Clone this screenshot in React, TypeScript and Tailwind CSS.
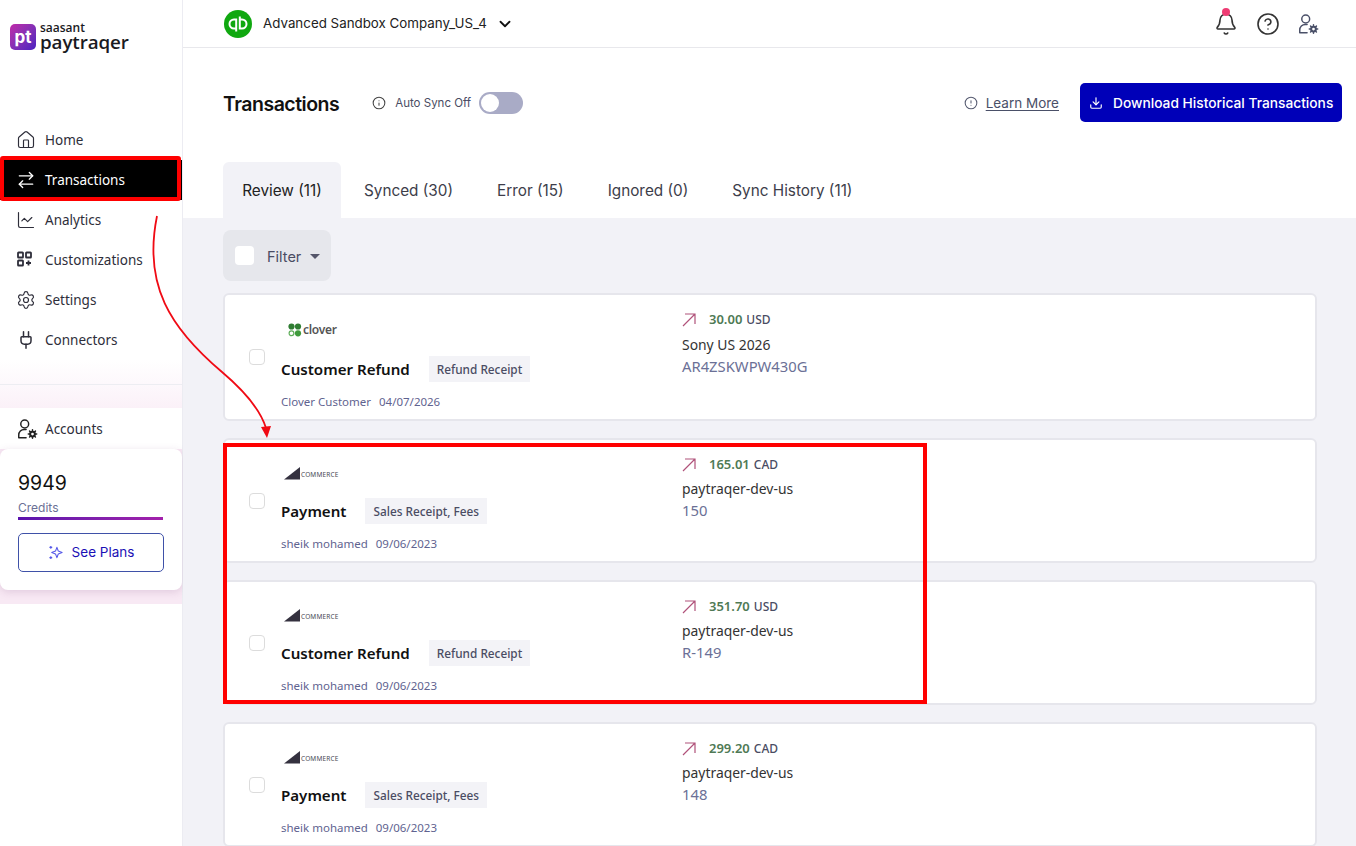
import { ArrowRightLeft, Bell, ChartLine, ChevronDown, CircleAlert, CircleHelp, Download, House, Info, Plug, Settings } from "lucide-react";

const UI = "font-['Inter',sans-serif]";
const CARD = "font-['Noto_Sans','Open_Sans',sans-serif]";

const UserGear = ({ size = 22 }: { size?: number }) => (
  <svg width={size} height={size} viewBox="0 0 24 24" fill="none" stroke="currentColor" strokeWidth="1.6" strokeLinecap="round">
    <circle cx="9.5" cy="6.5" r="4.3" />
    <path d="M3 21.5v-3a6 6 0 0 1 6-6h2M3 21.5h8" />
    <circle cx="18" cy="17.5" r="2.6" strokeWidth="2.2" />
    <path d="M18 12.8v1.6M18 20.6v1.6M13.4 17.5H15M21 17.5h1.6M14.8 14.3l1 1M20.2 19.7l1 1M14.8 20.7l1-1M20.2 15.3l1-1" strokeWidth="1.6" />
  </svg>
);

const GridPlus = () => (
  <svg width="18" height="18" viewBox="0 0 18 18" fill="none" stroke="currentColor" strokeWidth="1.8">
    <rect x="2" y="1.500" width="5" height="5" rx="0.6" />
    <rect x="10" y="1.500" width="5" height="5" rx="0.6" />
    <rect x="2" y="9.500" width="5" height="5" rx="0.6" />
    <path d="M12.500 9.500v5M10 12h5" />
  </svg>
);

const Sparkle = () => (
  <svg width="15" height="15" viewBox="0 0 16 16" fill="none" stroke="#5558e8" strokeWidth="1.2" strokeLinejoin="round">
    <path d="M9.500 2.500 11 6.500 15 8l-4 1.500-1.500 4-1.500-4L4 8l4-1.500z" />
    <path d="M3 1v3M1.500 2.500h3M3 12v3M1.500 13.500h3" />
  </svg>
);

const UpArrow = () => (
  <svg width="14" height="14" viewBox="0 0 14 14" fill="none" stroke="#b0527a" strokeWidth="1.2">
    <path d="M1 13 13 1M3 1h10v10" />
  </svg>
);

const navItems = [
  { label: "Home", icon: <House size={20} strokeWidth={1.4} /> },
  { label: "Transactions", icon: <ArrowRightLeft size={20} strokeWidth={1.6} />, active: true },
  { label: "Analytics", icon: <ChartLine size={20} strokeWidth={1.4} /> },
  { label: "Customizations", icon: <GridPlus /> },
  { label: "Settings", icon: <Settings size={20} strokeWidth={1.4} /> },
  { label: "Connectors", icon: <Plug size={20} strokeWidth={1.8} /> },
];

const tabs = ["Synced (30)", "Error (15)", "Ignored (0)", "Sync History (11)"];

const Clover = () => (
  <div className="mt-px flex h-[24px] items-center pl-[7px]">
    <svg width="14" height="14" viewBox="0 0 14 14">
      <circle cx="3.500" cy="3.500" r="3.100" fill="#2f7d32" />
      <circle cx="10" cy="3.500" r="3.100" fill="#2f7d32" />
      <circle cx="10" cy="10.300" r="3.100" fill="#3f9a3c" />
      <circle cx="3.500" cy="10.300" r="2.400" fill="none" stroke="#5fae5a" strokeWidth="1.200" />
    </svg>
    <span className="ml-px text-[12px] leading-none font-semibold tracking-[-0.3px] text-[#555]">clover</span>
  </div>
);

const BigCommerce = () => (
  <div className="flex h-[24px] items-center pl-[3px]">
    <svg width="18" height="13" viewBox="0 0 18 13" className="-mt-[2px]">
      <path d="M0 12.500 16 0v12.500z" fill="#34313f" />
    </svg>
    <span className="ml-[-1px] mt-[3px] text-[6.500px] leading-none tracking-[0.15px] text-[#4a4a55]">COMMERCE</span>
  </div>
);

type Txn = {
  source: "clover" | "bigcommerce";
  title: string;
  badge: string;
  customer: string;
  date: string;
  amount: string;
  currency: string;
  account: string;
  ref: string;
};

const txns: Txn[] = [
  { source: "clover", title: "Customer Refund", badge: "Refund Receipt", customer: "Clover Customer", date: "04/07/2026", amount: "30.00", currency: "USD", account: "Sony US 2026", ref: "AR4ZSKWPW430G" },
  { source: "bigcommerce", title: "Payment", badge: "Sales Receipt, Fees", customer: "sheik mohamed", date: "09/06/2023", amount: "165.01", currency: "CAD", account: "paytraqer-dev-us", ref: "150" },
  { source: "bigcommerce", title: "Customer Refund", badge: "Refund Receipt", customer: "sheik mohamed", date: "09/06/2023", amount: "351.70", currency: "USD", account: "paytraqer-dev-us", ref: "R-149" },
  { source: "bigcommerce", title: "Payment", badge: "Sales Receipt, Fees", customer: "sheik mohamed", date: "09/06/2023", amount: "299.20", currency: "CAD", account: "paytraqer-dev-us", ref: "148" },
];

const TxnCard = ({ txn }: { txn: Txn }) => {
  const clover = txn.source === "clover";
  return (
    <div className={`${CARD} flex shrink-0 items-center rounded-md border-2 border-[#e6e6ec] bg-white pl-6 ${clover ? "h-[128px]" : "h-[125px]"}`}>
      <div className="h-4 w-4 shrink-0 rounded-[4px] border border-[#dcdcdc] bg-white" />
      <div className="ml-4 h-full w-[401px] shrink-0 pt-[22px]">
        {clover ? <Clover /> : <BigCommerce />}
        <div className={`flex h-[26px] items-center ${clover ? "mt-[14px]" : "mt-[12px]"}`}>
          <span className="text-[15.100px] font-semibold text-[#111]">{txn.title}</span>
          <span className="ml-[19px] flex h-[26px] items-center bg-[#f3f3f7] px-2 pt-px text-[11.800px] font-medium text-[#4a4c63]">{txn.badge}</span>
        </div>
        <div className="mt-[12px] flex gap-2 text-[11.500px] leading-[16px] text-[#5f6390]">
          <span>{txn.customer}</span>
          <span>{txn.date}</span>
        </div>
      </div>
      <div className="h-full pt-[17px]">
        <div className="flex h-4 items-center">
          <UpArrow />
          <span className="ml-[13px] text-[13px] font-semibold text-[#4f7a55]">{txn.amount}</span>
          <span className="ml-1 text-[12px] font-medium text-[#4a4c63]">{txn.currency}</span>
        </div>
        <div className={`text-[13.900px] leading-[20px] text-[#333] ${clover ? "mt-[7px]" : "mt-[6px]"}`}>{txn.account}</div>
        <div className="mt-[1px] text-[14.800px] leading-[20px] text-[#6b7096]">{txn.ref}</div>
      </div>
    </div>
  );
};

const Sidebar = () => (
  <aside className={`${UI} flex w-[183px] shrink-0 flex-col border-r border-[#ececf2] bg-white`}>
    <div className="flex h-[120px] items-start pl-[10px] pt-[24px]">
      <div className="flex h-[26px] w-[26px] items-center justify-center rounded-[5px] bg-gradient-to-br from-[#c026a8] to-[#4c1fc0] text-[17px] leading-none font-bold text-white">pt</div>
      <div className="ml-[4px] -mt-[1px] flex flex-col font-['Open_Sans',sans-serif] text-[#1a1a22]">
        <span className="text-[12px] leading-[10px] font-semibold">saasant</span>
        <span className="text-[18.800px] leading-[19px] font-semibold tracking-[-0.1px]">paytraqer</span>
      </div>
    </div>
    {navItems.map((item) => (
      <div key={item.label} className={`${CARD} flex h-10 items-center pl-[16px] text-[13.500px] ${item.active ? "bg-black text-white" : "text-[#2e2e3a]"}`}>
        <span className="flex w-[29px] shrink-0">{item.icon}</span>
        {item.label}
      </div>
    ))}
    <div className="h-[24px] bg-gradient-to-b from-white to-[#fdf8fc]" />
    <div className="h-[24px] border-t border-[#ededf2] bg-gradient-to-b from-[#fdf8fc] to-[#fbf1f8]" />
    <div className={`${CARD} flex h-[41px] items-center bg-white pl-[16px] text-[13.500px] text-[#2e2e3a]`}>
      <span className="flex w-[29px] shrink-0 text-[#222]"><UserGear /></span>
      <span className="pt-[2px]">Accounts</span>
    </div>
    <div className="bg-[#f8e9f4] pb-[14px]">
      <div className="h-[141px] rounded-lg bg-white px-[18px] pt-[22px] shadow-[0_2px_8px_rgba(120,60,120,0.18)]">
        <div className="text-[19.500px] leading-[24px] text-[#111]">9949</div>
        <div className="mt-[5px] text-[12px] leading-[16px] text-[#6b7096]">Credits</div>
        <div className="mt-[1px] h-[3px] w-[145px] bg-gradient-to-r from-[#5a12ad] to-[#a320ab]" />
        <div className="mt-[13px] flex h-[39px] w-[146px] items-center justify-center gap-[9px] rounded-[5px] border border-[#3f51a8] text-[13.500px] text-[#1b10b5]">
          <Sparkle />
          See Plans
        </div>
      </div>
    </div>
  </aside>
);

const Header = () => (
  <header className="flex h-[48px] shrink-0 items-center border-b border-[#e8e8ec] bg-white pl-[41px] pr-[37px]">
    <svg width="28" height="28" viewBox="0 0 28 28">
      <circle cx="14" cy="14" r="14" fill="#10a810" />
      <path d="M11 8.500H10a5.500 5.500 0 0 0 0 11h1.500v-2H10a3.500 3.500 0 0 1 0-7h1.200v11h2V8.500zM17 19.500h1a5.500 5.500 0 0 0 0-11h-1.500v2H18a3.500 3.500 0 0 1 0 7h-1.200V6.500h-2v13z" fill="#fff" />
    </svg>
    <span className="ml-[11px] text-[13.350px] text-[#222]">Advanced Sandbox Company_US_4</span>
    <ChevronDown size={18} strokeWidth={2.4} className="ml-[9px] text-[#111]" />
    <div className="ml-auto flex items-center">
      <div className="relative">
        <Bell size={24} strokeWidth={1.6} className="text-[#333]" />
        <span className="absolute left-[8px] -top-[4px] h-2 w-2 rounded-full bg-[#ee3b73]" />
      </div>
      <CircleHelp size={24} strokeWidth={1.6} className="ml-[18px] text-[#333]" />
      <span className="ml-[17px] text-[#4a5068]"><UserGear /></span>
    </div>
  </header>
);

const TitleRow = () => (
  <div className="flex h-[114px] shrink-0 items-start bg-white pl-[40px] pr-[14px] pt-[35px]">
    <h1 className="mt-[6px] text-[19.500px] leading-[30px] font-semibold tracking-[-0.5px] text-[#111]">Transactions</h1>
    <div className="mt-[9px] ml-[33px] flex h-[22px] items-center">
      <Info size={14} strokeWidth={1.8} className="text-[#444]" />
      <span className="ml-[9px] pt-px text-[11.500px] text-[#4a4c63]">Auto Sync Off</span>
      <div className="ml-[8px] flex h-[22px] w-[44px] items-center rounded-full bg-[#a9abc6] pl-[2px]">
        <div className="h-[18px] w-[18px] rounded-full bg-white" />
      </div>
    </div>
    <div className="ml-auto flex items-center">
      <CircleAlert size={14} strokeWidth={1.8} className="text-[#555a70]" />
      <span className="ml-[8px] pt-px text-[13.500px] text-[#4a5068] underline underline-offset-2">Learn More</span>
      <div className="ml-[21px] flex h-[39px] w-[262px] items-center rounded-[5px] bg-[#0000b8] pl-[9px] text-[13.750px] font-medium text-white">
        <Download size={14} strokeWidth={2} />
        <span className="ml-[10px] pt-px">Download Historical Transactions</span>
      </div>
    </div>
  </div>
);

const Tabs = () => (
  <div className="flex h-[56px] shrink-0 items-stretch bg-white pl-[40px] text-[15.300px]">
    <div className="mr-px flex w-[118px] items-center justify-center rounded-t-md bg-[#f2f2f7] pt-[2px] text-[#222]">Review (11)</div>
    {tabs.map((tab) => (
      <div key={tab} className="flex items-center px-[22px] pt-[2px] text-[#3d3d4a]">{tab}</div>
    ))}
  </div>
);

export default function App() {
  return (
    <div className={`${UI} relative flex h-[846px] w-[1356px] overflow-hidden bg-white`}>
      <Sidebar />
      <main className="flex min-w-0 flex-1 flex-col">
        <Header />
        <TitleRow />
        <Tabs />
        <div className="flex flex-1 flex-col overflow-hidden bg-[#f2f2f7] pl-[40px] pr-[39px] pt-[12px]">
          <div className="flex h-[51px] w-[108px] shrink-0 items-center rounded-lg bg-[#e6e7ec] pl-3">
            <div className="h-[19px] w-[19px] rounded-[4px] bg-white" />
            <span className="ml-[13px] pt-[3px] text-[14.500px] text-[#4a4c63]">Filter</span>
            <span className="ml-[9px] mt-[2px] h-0 w-0 border-x-[5px] border-t-[5px] border-x-transparent border-t-[#55566a]" />
          </div>
          <div className="mt-[12px] flex flex-col gap-[17px]">
            {txns.map((txn) => (
              <TxnCard key={txn.ref} txn={txn} />
            ))}
          </div>
        </div>
      </main>

      {/* annotations drawn on top of the screenshot */}
      <div className="pointer-events-none absolute left-0 top-[156px] h-[45px] w-[181px] rounded-[3px] border-4 border-[#ff0000]" />
      <div className="pointer-events-none absolute left-[223px] top-[443px] h-[261px] w-[704px] border-4 border-[#ff0000]" />
      <svg className="pointer-events-none absolute left-0 top-0" width="1356" height="846" fill="none">
        <path d="M157 216C143 285 170 328 222 372C248 394 261 412 266 428" stroke="#f00a14" strokeWidth="1.800" />
        <path d="M261 427L271 426L267 438Z" fill="#f00a14" />
      </svg>
    </div>
  );
}
